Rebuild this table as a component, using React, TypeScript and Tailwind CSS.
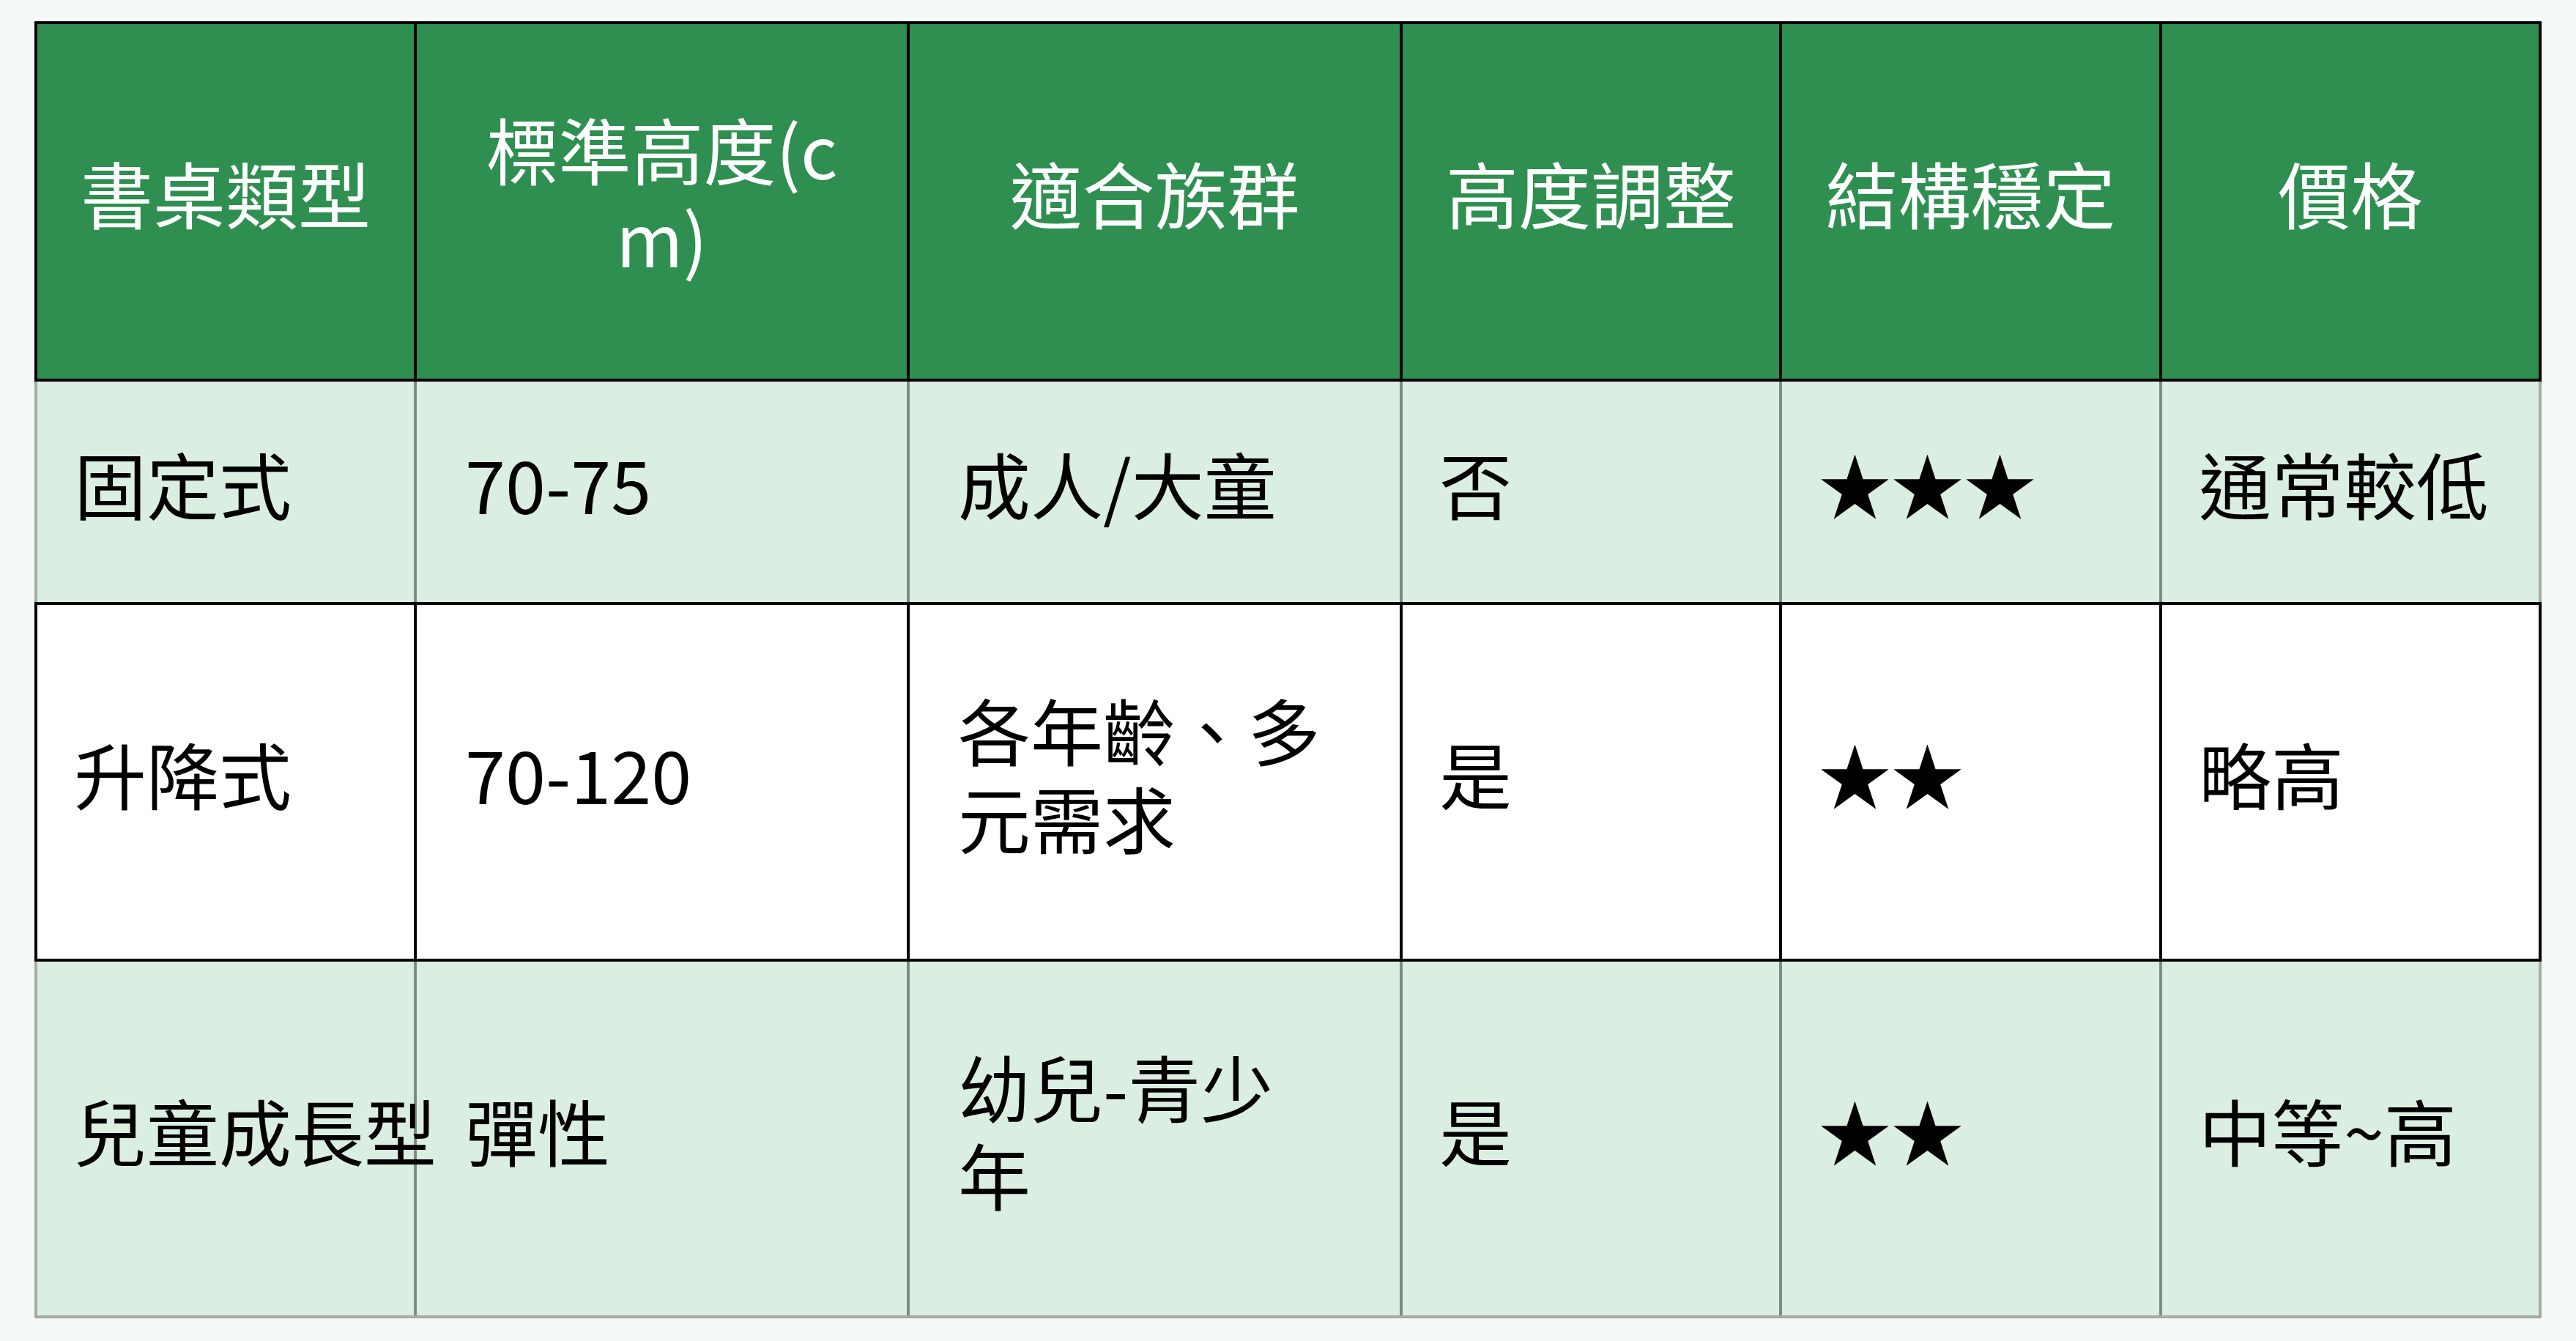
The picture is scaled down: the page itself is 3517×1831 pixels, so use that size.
import React from "react";

const cols = "grid grid-cols-[518px_673px_673px_518px_519px_518px]";

function HeaderCell({ children }: { children: React.ReactNode }) {
  return (
    <div className="flex items-center justify-center border-r-4 border-black pb-[26px] text-center text-white leading-[120px]">
      <span>{children}</span>
    </div>
  );
}

function Cell({
  children,
  wide,
  line,
  nowrap,
}: {
  children: React.ReactNode;
  wide?: boolean;
  line: string;
  nowrap?: boolean;
}) {
  return (
    <div
      className={`flex items-center border-r-4 ${line} ${wide ? "pl-[66px]" : "pl-[50px]"} pb-[26px] leading-[120px] text-black ${nowrap ? "whitespace-nowrap" : ""}`}
    >
      <span>{children}</span>
    </div>
  );
}

export default function App() {
  const light = "border-[#808a84]";
  const dark = "border-black";
  return (
    <div className="min-h-screen w-full bg-[#f4f8f6] pl-[47px] pt-[29px] font-['Noto_Sans_CJK_TC','Noto_Sans',sans-serif] text-[99px]">
      <div className="w-[3423px]">
        {/* header */}
        <div className={`${cols} h-[492px] border-l-4 border-y-4 border-black bg-[#2e8f50]`}>
          <HeaderCell>書桌類型</HeaderCell>
          <HeaderCell>
            標準高度(c
            <br />
            m)
          </HeaderCell>
          <HeaderCell>適合族群</HeaderCell>
          <HeaderCell>高度調整</HeaderCell>
          <HeaderCell>結構穩定</HeaderCell>
          <HeaderCell>價格</HeaderCell>
        </div>

        {/* row 1 */}
        <div className={`${cols} h-[301px] border-l-4 border-[#a6aba8] bg-[#dbeee2]`}>
          <Cell line={light}>固定式</Cell>
          <Cell line={light} wide>70-75</Cell>
          <Cell line={light} wide>成人/大童</Cell>
          <Cell line={light}>否</Cell>
          <Cell line={light}>★★★</Cell>
          <Cell line="border-[#a6aba8]">通常較低</Cell>
        </div>

        {/* row 2 */}
        <div className={`${cols} h-[491px] border-l-4 border-y-4 border-black bg-white`}>
          <Cell line={dark}>升降式</Cell>
          <Cell line={dark} wide>70-120</Cell>
          <Cell line={dark} wide>
            各年齡、多
            <br />
            元需求
          </Cell>
          <Cell line={dark}>是</Cell>
          <Cell line={dark}>★★</Cell>
          <Cell line={dark}>略高</Cell>
        </div>

        {/* row 3 */}
        <div className={`${cols} h-[487px] border-l-4 border-b-4 border-[#a6aba8] bg-[#dbeee2]`}>
          <Cell line={light} nowrap>兒童成長型</Cell>
          <Cell line={light} wide>彈性</Cell>
          <Cell line={light} wide>
            幼兒-青少
            <br />
            年
          </Cell>
          <Cell line={light}>是</Cell>
          <Cell line={light}>★★</Cell>
          <Cell line="border-[#a6aba8]">中等~高</Cell>
        </div>
      </div>
    </div>
  );
}
